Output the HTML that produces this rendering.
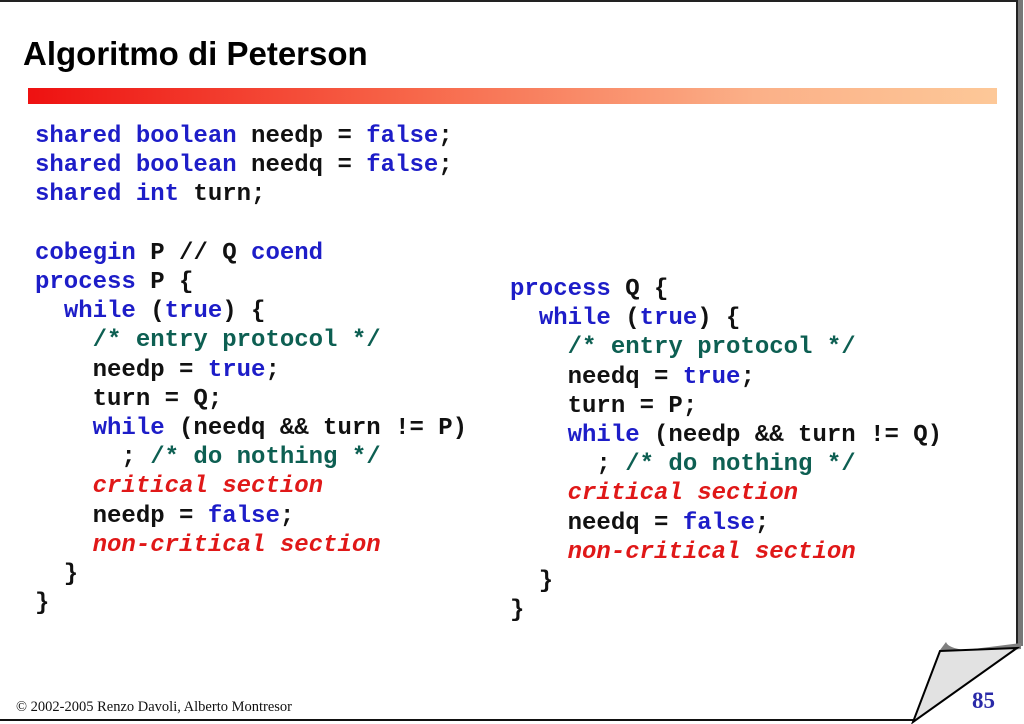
<!DOCTYPE html>
<html><head><meta charset="utf-8"><style>
html,body{margin:0;padding:0;}
body{width:1024px;height:724px;position:relative;background:#fff;overflow:hidden;}
.t{position:absolute;left:23px;top:35px;font:bold 33px "Liberation Sans",sans-serif;color:#000;margin:0;}
.bar{position:absolute;left:28px;top:88px;width:969px;height:16px;background:linear-gradient(to right,#ee1111,#f7674a 40%,#fbb088 75%,#fdc898);}
pre{position:absolute;margin:0;font:bold 24px/29.2px "Liberation Mono",monospace;color:#111;}
.b{color:#1d1dc8}.c{color:#0d5f52}.r{color:#e01818;font-style:italic}
.foot{position:absolute;left:16px;top:699px;font:14.5px "Liberation Serif",serif;color:#111;}
.num{position:absolute;left:972px;top:688px;font:bold 23px "Liberation Serif",serif;color:#2a2aa8;}
</style></head><body>
<div style="position:absolute;left:0;top:0;width:1018px;height:2px;background:#222"></div>
<div style="position:absolute;left:1016px;top:0;width:2px;height:646px;background:#222"></div>
<div style="position:absolute;left:1018px;top:0;width:5px;height:646px;background:#777"></div>
<div style="position:absolute;left:0;top:719px;width:914px;height:2px;background:#111"></div>
<svg style="position:absolute;left:0;top:0" width="1024" height="724">
<path d="M946,642 Q948,648 965,650 Q990,647 1021,643 L1021,649 Q990,652 965,655 Q944,652 940,650 Z" fill="#808080"/>
<polygon points="940,651 1017,648 913,722" fill="#e2e2e2" stroke="#000" stroke-width="2"/>
</svg>
<div class="t">Algoritmo di Peterson</div>
<div class="bar"></div>
<pre style="left:35px;top:122px"><span class="b">shared boolean</span> needp = <span class="b">false</span>;
<span class="b">shared boolean</span> needq = <span class="b">false</span>;
<span class="b">shared int</span> turn;

<span class="b">cobegin</span> P // Q <span class="b">coend</span>
<span class="b">process</span> P {
  <span class="b">while</span> (<span class="b">true</span>) {
    <span class="c">/* entry protocol */</span>
    needp = <span class="b">true</span>;
    turn = Q;
    <span class="b">while</span> (needq &amp;&amp; turn != P)
      ; <span class="c">/* do nothing */</span>
    <span class="r">critical section</span>
    needp = <span class="b">false</span>;
    <span class="r">non-critical section</span>
  }
}</pre>
<pre style="left:510px;top:275px"><span class="b">process</span> Q {
  <span class="b">while</span> (<span class="b">true</span>) {
    <span class="c">/* entry protocol */</span>
    needq = <span class="b">true</span>;
    turn = P;
    <span class="b">while</span> (needp &amp;&amp; turn != Q)
      ; <span class="c">/* do nothing */</span>
    <span class="r">critical section</span>
    needq = <span class="b">false</span>;
    <span class="r">non-critical section</span>
  }
}</pre>
<div class="foot">© 2002-2005 Renzo Davoli, Alberto Montresor</div>
<div class="num">85</div>
</body></html>
